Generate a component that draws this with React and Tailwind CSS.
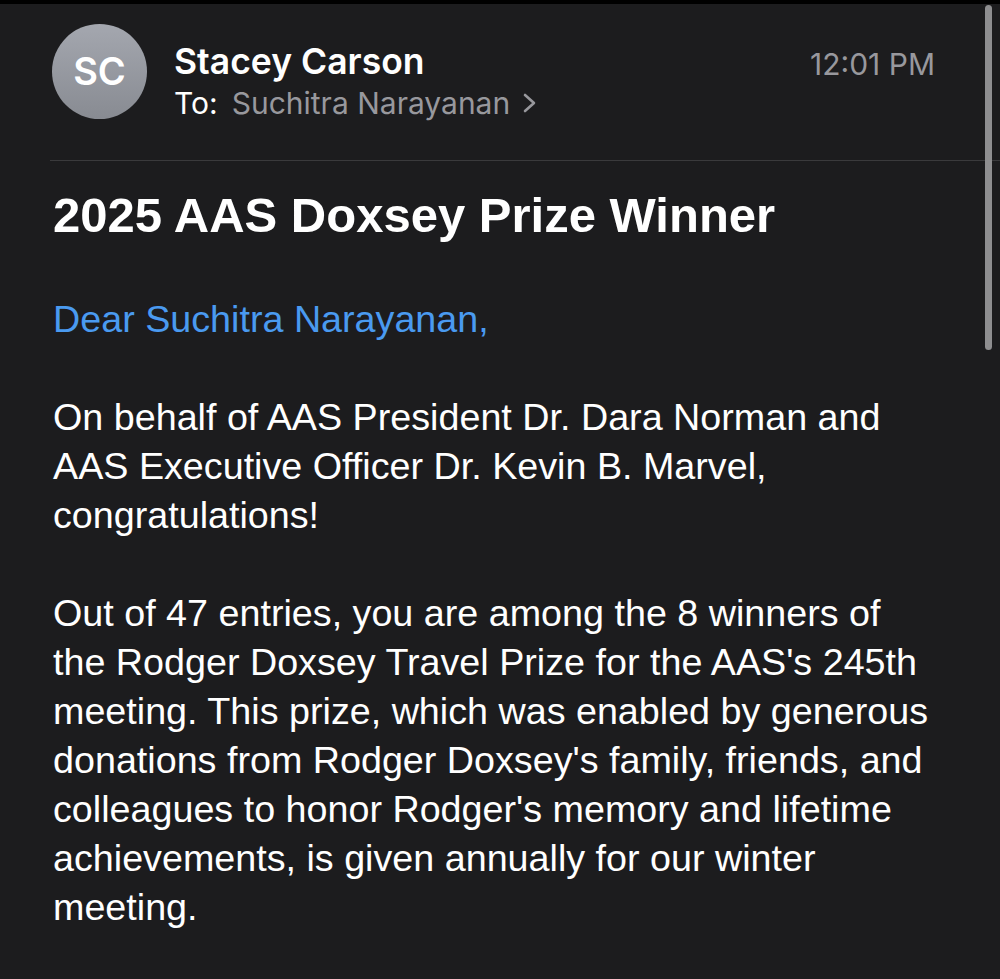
import React from "react";

const body = { fontFamily: '"Liberation Sans", Arial, sans-serif' };
const ui = { fontFamily: 'Inter, "Liberation Sans", sans-serif' };

export default function App() {
  const p1 = [
    "On behalf of AAS President Dr. Dara Norman and",
    "AAS Executive Officer Dr. Kevin B. Marvel,",
    "congratulations!",
  ];
  const p2 = [
    "Out of 47 entries, you are among the 8 winners of",
    "the Rodger Doxsey Travel Prize for the AAS's 245th",
    "meeting. This prize, which was enabled by generous",
    "donations from Rodger Doxsey's family, friends, and",
    "colleagues to honor Rodger's memory and lifetime",
    "achievements, is given annually for our winter",
    "meeting.",
  ];
  return (
    <div className="w-[1000px] h-[979px] bg-[#1c1c1e] overflow-hidden relative flex flex-col">
      <div className="h-[4px] bg-black shrink-0" />
      <div className="absolute right-[8px] top-[5px] w-[7px] h-[345px] rounded-full bg-[#8e8e90]" />
      <div className="flex items-start pl-[52px] pr-[65px] pt-[20px] h-[156px]" style={ui}>
        <div
          className="w-[95px] h-[95px] rounded-full flex items-center justify-center shrink-0"
          style={{ background: "linear-gradient(180deg,#a4a7af,#888b92)" }}
        >
          <span className="text-white text-[38px] font-semibold">SC</span>
        </div>
        <div className="ml-[27px] flex-1 flex flex-col">
          <div className="flex items-start justify-between">
            <span className="text-white text-[35.5px] font-semibold leading-[40px] mt-[18px]">Stacey Carson</span>
            <span className="text-[#98989d] text-[30px] leading-[36px] mt-[22px]">12:01 PM</span>
          </div>
          <div className="flex items-center text-[30px] leading-[36px] mt-[3px]">
            <span className="text-white">To:</span>
            <span className="text-[#98989d] ml-[14px]">Suchitra Narayanan</span>
            <svg width="16" height="24" viewBox="0 0 16 24" className="ml-[12px]" fill="none">
              <path d="M3 4 L12 12 L3 20" stroke="#98989d" strokeWidth="2.6" strokeLinecap="round" strokeLinejoin="round" />
            </svg>
          </div>
        </div>
      </div>
      <div className="ml-[50px] h-px bg-[#3a3a3c]" />
      <div className="pl-[53px]" style={body}>
        <h1 className="text-white font-bold text-[49px] leading-[56px] mt-[26px] whitespace-nowrap">
          2025 AAS Doxsey Prize Winner
        </h1>
        <div className="text-[37.7px] leading-[49px] mt-[52px] whitespace-nowrap">
          <div className="text-[#4a9af0]">Dear Suchitra Narayanan,</div>
          <div className="h-[49px]" />
          <div className="text-white">
            {p1.map((l) => (
              <div key={l}>{l}</div>
            ))}
          </div>
          <div className="h-[49px]" />
          <div className="text-white">
            {p2.map((l) => (
              <div key={l}>{l}</div>
            ))}
          </div>
        </div>
      </div>
    </div>
  );
}
